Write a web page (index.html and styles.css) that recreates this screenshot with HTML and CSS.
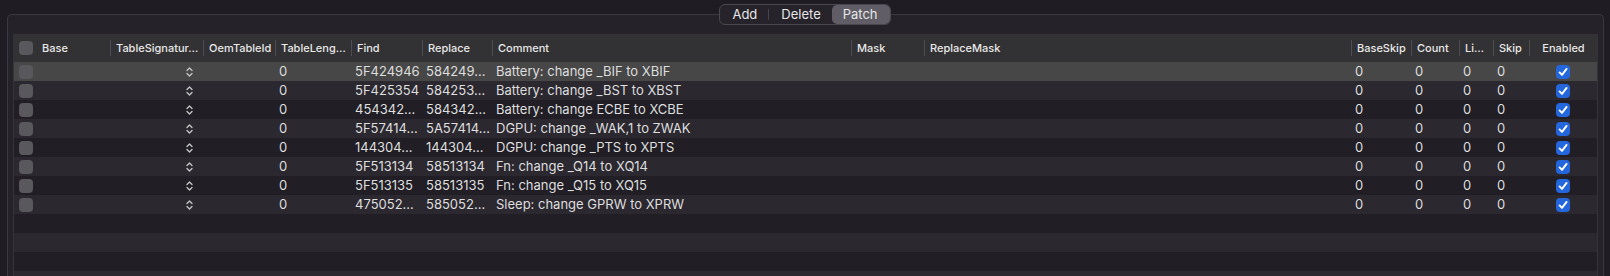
FILE: index.html
```html
<!DOCTYPE html>
<html lang="en">
  <head>
    <meta charset="UTF-8" />
    <meta name="viewport" content="width=device-width, initial-scale=1.0" />
    <title>ACPI Patch</title>
    <link rel="stylesheet" href="styles.css">
  </head>
  <body>
    <div class="panel">
      <div class="seg">
        <span class="seg-item">Add</span>
        <span class="seg-sep"></span>
        <span class="seg-item">Delete</span>
        <span class="seg-item active">Patch</span>
      </div>

      <div class="box">
        <div class="table">
          <div class="row head">
            <div class="cell"><span class="check"></span></div>
            <div class="cell">Base</div>
            <div class="cell sep">TableSignatur…</div>
            <div class="cell sep">OemTableId</div>
            <div class="cell sep">TableLeng…</div>
            <div class="cell sep">Find</div>
            <div class="cell sep">Replace</div>
            <div class="cell sep">Comment</div>
            <div class="cell sep">Mask</div>
            <div class="cell sep">ReplaceMask</div>
            <div class="cell sep">BaseSkip</div>
            <div class="cell sep">Count</div>
            <div class="cell sep">Li…</div>
            <div class="cell sep">Skip</div>
            <div class="cell sep center">Enabled</div>
          </div>

          <div class="rows" id="rows"></div>
        </div>
      </div>
    </div>

    <script>
      const patches = [
        ["5F424946", "584249…", "Battery: change _BIF to XBIF"],
        ["5F425354", "584253…", "Battery: change _BST to XBST"],
        ["454342…", "584342…", "Battery: change ECBE to XCBE"],
        ["5F57414…", "5A57414…", "DGPU: change _WAK,1 to ZWAK"],
        ["144304…", "144304…", "DGPU: change _PTS to XPTS"],
        ["5F513134", "58513134", "Fn: change _Q14 to XQ14"],
        ["5F513135", "58513135", "Fn: change _Q15 to XQ15"],
        ["475052…", "585052…", "Sleep: change GPRW to XPRW"]
      ];

      const stepper =
        '<svg class="stepper" width="7" height="10" viewBox="0 0 7 10">' +
        '<path d="M1 3.5 L3.5 1 L6 3.5 M1 6.5 L3.5 9 L6 6.5" fill="none" stroke="#c8c8c8" stroke-width="1.3" stroke-linecap="round" stroke-linejoin="round"/></svg>';

      const tick =
        '<span class="check on"><svg width="14" height="14" viewBox="0 0 14 14">' +
        '<path d="M3.6 7.4 L6 9.9 L10.6 3.9" fill="none" stroke="#fff" stroke-width="1.9" stroke-linecap="round" stroke-linejoin="round"/></svg></span>';

      const rows = document.getElementById("rows");
      let html = "";
      patches.forEach((p, i) => {
        html += `<div class="row${i === 0 ? " selected" : ""}">
          <div class="cell"><span class="check"></span></div>
          <div class="cell"></div>
          <div class="cell right">${stepper}</div>
          <div class="cell"></div>
          <div class="cell">0</div>
          <div class="cell">${p[0]}</div>
          <div class="cell">${p[1]}</div>
          <div class="cell">${p[2]}</div>
          <div class="cell"></div>
          <div class="cell"></div>
          <div class="cell">0</div>
          <div class="cell">0</div>
          <div class="cell">0</div>
          <div class="cell">0</div>
          <div class="cell center">${tick}</div>
        </div>`;
      });
      for (let i = 0; i < 4; i++) {
        html += '<div class="row empty"></div>';
      }
      rows.innerHTML = html;
    </script>
  </body>
</html>
```

FILE: styles.css
```css
html,
body {
  margin: 0;
  height: 276px;
  overflow: hidden;
}
body {
  background: #1f1c24;
  color: #dedede;
  font-family: Inter, "Noto Sans", sans-serif;
}
.panel {
  display: flex;
  flex-direction: column;
  padding-top: 4px;
  height: 272px;
  overflow: hidden;
}

/* segmented control */
.seg {
  align-self: center;
  position: relative;
  z-index: 1;
  display: flex;
  align-items: center;
  height: 19px;
  border: 1px solid #4a4751;
  border-radius: 6px;
  background: #26232b;
  font-size: 13px;
  color: #e6e6e6;
}
.seg-item {
  height: 19px;
  line-height: 19px;
  padding: 0 11px 0 12px;
}
.seg-item.active {
  background: #605d66;
  border-radius: 5px;
  padding: 0 12px 0 11px;
}
.seg-sep {
  width: 1px;
  height: 11px;
  background: #46444c;
}

.box {
  flex: none;
  margin: -11px 6px 0 7px;
  padding: 19px 5px 0 5px;
  border: 1px solid #3b3841;
  border-bottom: none;
  border-radius: 5px 5px 0 0;
  background: #252229;
  height: 243px;
  overflow: hidden;
}
.table {
  border-left: 1px solid #34323a;
  border-right: 1px solid #34323a;
}

.row {
  display: grid;
  grid-template-columns: 23px 73px 93px 72px 76px 71px 70px 359px 73px 427px 60px 48px 34px 36px 68px;
  height: 19px;
  align-items: center;
  font-size: 13px;
}
.rows .row:nth-child(even) {
  background: #2b2830;
}
.rows .row:nth-child(odd) {
  background: #211e26;
}
.rows .row.selected {
  background: #474747;
}

.cell {
  white-space: nowrap;
  overflow: hidden;
  padding-left: 4px;
  height: 19px;
  line-height: 19px;
  display: flex;
  align-items: center;
}
.cell.right {
  justify-content: flex-end;
  padding-right: 10px;
}
.cell.center {
  justify-content: center;
  padding-left: 0;
}

.head {
  height: 28px;
  background: #323133;
  font-size: 11px;
  font-weight: 500;
  color: #e8e8e8;
}
.head .cell {
  height: 28px;
  padding-left: 5px;
}
.head .cell.sep {
  border-left: 1px solid #4d4c50;
  height: 16px;
  line-height: 16px;
}
.head .cell.center {
  padding-left: 0;
}

.check {
  display: inline-block;
  width: 14px;
  height: 14px;
  border-radius: 4px;
  background: #59585d;
  margin-left: 1px;
}
.head .check {
  margin-left: 0;
}
.check.on {
  background: #2466dc;
  margin-left: 0;
}
.check svg {
  display: block;
}
.stepper {
  display: block;
}
```
